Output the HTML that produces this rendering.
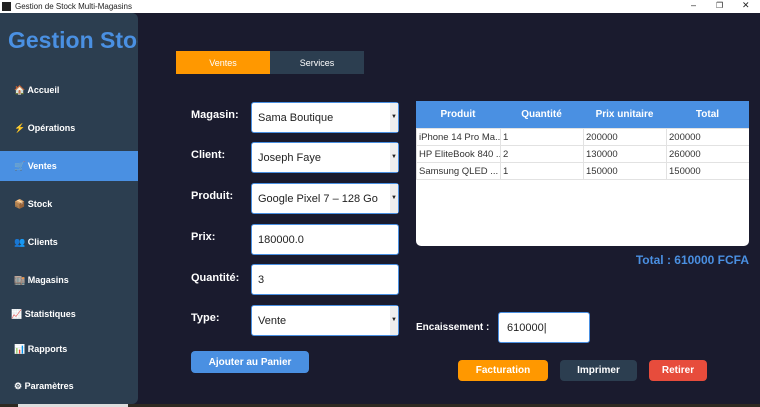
<!DOCTYPE html>
<html><head><meta charset="utf-8"><style>
*{margin:0;padding:0;box-sizing:border-box}
body{width:760px;height:407px;background:#1a1b2e;position:relative;overflow:hidden;font-family:"Liberation Sans",sans-serif}
.abs{position:absolute}
.tb{left:0;top:0;width:760px;height:13px;background:#fff;font-size:8px;color:#222}
.side{left:0;top:13px;width:138px;height:391px;background:#2c3e50;border-radius:0 6px 6px 0}
.title{left:8px;top:27px;font-size:23px;font-weight:bold;color:#4a90e2;white-space:nowrap;width:130px;overflow:hidden}
.mi{left:14px;font-size:9px;font-weight:bold;color:#fff;white-space:nowrap}
.sel{left:0;top:151px;width:138px;height:30px;background:#4a90e2}
.lbl{left:191px;font-size:11px;font-weight:bold;color:#fff}
.inp{left:251px;width:148px;height:31px;background:#fff;border:1.5px solid #4a90e2;border-radius:3px;font-size:11px;color:#222;padding:9px 6px}
.arr{position:absolute;right:0;top:0;width:8px;height:100%;background:#eee;font-size:6px;line-height:28px;text-align:center}
.btn{font-size:10px;font-weight:bold;color:#fff;text-align:center;border-radius:4px;display:flex;align-items:center;justify-content:center}
table{border-collapse:collapse;font-size:9.5px;color:#333}
td{height:17px;border:1px solid #e2e2e2;padding:0 2px;white-space:nowrap;overflow:hidden}
</style></head><body>
<div class="abs tb"><span class="abs" style="left:2px;top:2px;width:9px;height:9px;background:#222"></span><span class="abs" style="left:15px;top:2px">Gestion de Stock Multi-Magasins</span><span class="abs" style="left:691px;top:0;font-size:9px">–</span><span class="abs" style="left:716px;top:1px;font-size:8px">❐</span><span class="abs" style="left:742px;top:0;font-size:9px">✕</span></div>
<div class="abs side"></div>
<div class="abs title">Gestion Stock</div>
<div class="abs sel"></div>
<div class="abs mi" style="top:85px">🏠 Accueil</div>
<div class="abs mi" style="top:123px">⚡ Opérations</div>
<div class="abs mi" style="top:161px">🛒 Ventes</div>
<div class="abs mi" style="top:199px">📦 Stock</div>
<div class="abs mi" style="top:237px">👥 Clients</div>
<div class="abs mi" style="top:275px">🏬 Magasins</div>
<div class="abs mi" style="top:309px;left:11px">📈 Statistiques</div>
<div class="abs mi" style="top:344px">📊 Rapports</div>
<div class="abs mi" style="top:381px">⚙ Paramètres</div>
<div class="abs btn" style="left:176px;top:51px;width:94px;height:23px;background:#ff9800;border-radius:0;font-weight:normal;font-size:9px">Ventes</div>
<div class="abs btn" style="left:270px;top:51px;width:94px;height:23px;background:#2c3e50;border-radius:0;font-weight:normal;font-size:9px">Services</div>
<div class="abs lbl" style="top:109px">Magasin:</div>
<div class="abs lbl" style="top:149px">Client:</div>
<div class="abs lbl" style="top:190px">Produit:</div>
<div class="abs lbl" style="top:231px">Prix:</div>
<div class="abs lbl" style="top:272px">Quantité:</div>
<div class="abs lbl" style="top:312px">Type:</div>
<div class="abs inp" style="top:102px">Sama Boutique<span class="arr">▼</span></div>
<div class="abs inp" style="top:142px">Joseph Faye<span class="arr">▼</span></div>
<div class="abs inp" style="top:183px">Google Pixel 7 – 128 Go<span class="arr">▼</span></div>
<div class="abs inp" style="top:224px">180000.0</div>
<div class="abs inp" style="top:264px">3</div>
<div class="abs inp" style="top:305px">Vente<span class="arr">▼</span></div>
<div class="abs btn" style="left:191px;top:351px;width:118px;height:22px;background:#4a90e2">Ajouter au Panier</div>
<div class="abs" style="left:416px;top:101px;width:333px;height:145px;background:#fff;border-radius:0 0 5px 5px;overflow:hidden">
<div style="height:27px;background:#4a90e2;display:flex;color:#fff;font-size:10px;font-weight:bold;line-height:27px;text-align:center"><div style="width:84px">Produit</div><div style="width:83px">Quantité</div><div style="width:83px">Prix unitaire</div><div style="width:83px">Total</div></div>
<table style="width:333px;table-layout:fixed"><col style="width:84px"><col style="width:83px"><col style="width:83px"><col style="width:83px">
<tr><td>iPhone 14 Pro Ma...</td><td>1</td><td>200000</td><td>200000</td></tr>
<tr><td>HP EliteBook 840 ...</td><td>2</td><td>130000</td><td>260000</td></tr>
<tr><td>Samsung QLED ...</td><td>1</td><td>150000</td><td>150000</td></tr></table></div>
<div class="abs" style="right:11px;top:253px;font-size:12px;font-weight:bold;color:#4a90e2">Total : 610000 FCFA</div>
<div class="abs" style="left:416px;top:322px;font-size:10px;font-weight:bold;color:#fff">Encaissement :</div>
<div class="abs inp" style="left:498px;top:312px;width:92px;padding:9px 8px">610000|</div>
<div class="abs btn" style="left:458px;top:360px;width:90px;height:21px;background:#ff9800">Facturation</div>
<div class="abs btn" style="left:560px;top:360px;width:77px;height:21px;background:#2c3e50">Imprimer</div>
<div class="abs btn" style="left:649px;top:360px;width:58px;height:21px;background:#e74c3c">Retirer</div>
<div class="abs" style="left:0;top:404px;width:760px;height:3px;background:#2e2a22"></div>
<div class="abs" style="left:18px;top:404px;width:110px;height:3px;background:#ddd"></div>
</body></html>
